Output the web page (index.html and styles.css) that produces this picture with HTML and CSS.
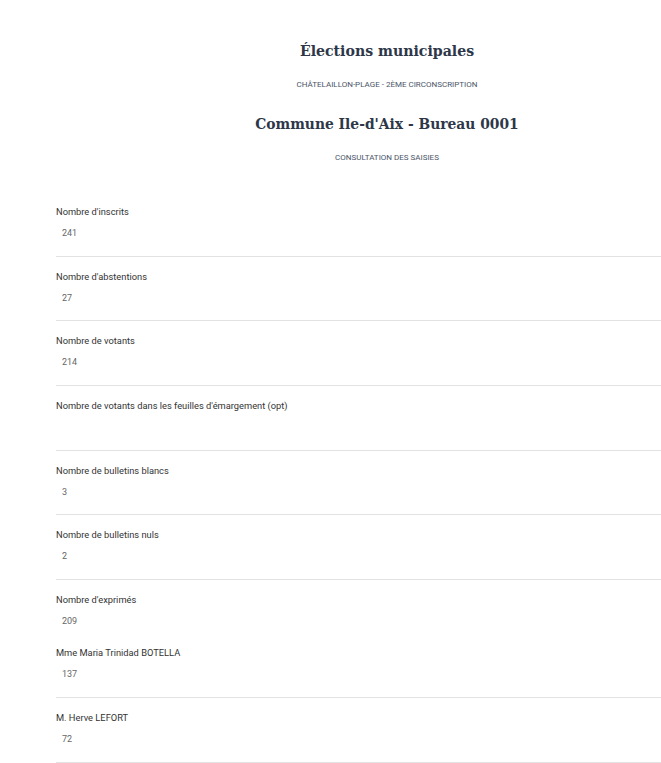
FILE: index.html
```html
<!DOCTYPE html>
<html lang="fr">
<head>
    <meta charset="UTF-8">
    <meta name="viewport" content="width=device-width, initial-scale=1.0">
    <title>Consultation des saisies</title>
    <link rel="stylesheet" href="styles.css">
</head>
<body>
    <div class="container">
        <div class="header">
            <h1>Élections municipales</h1>
            <p class="subtitle">Châtelaillon-Plage - 2ème circonscription</p>
            <h2>Commune Ile-d'Aix - Bureau 0001</h2>
            <p class="subtitle">Consultation des saisies</p>
        </div>

        <div class="results">
            <div class="field">
                <div class="field-label">Nombre d'inscrits</div>
                <div class="field-value">241</div>
            </div>
            <div class="field">
                <div class="field-label">Nombre d'abstentions</div>
                <div class="field-value">27</div>
            </div>
            <div class="field">
                <div class="field-label">Nombre de votants</div>
                <div class="field-value">214</div>
            </div>
            <div class="field">
                <div class="field-label">Nombre de votants dans les feuilles d'émargement (opt)</div>
                <div class="field-value"></div>
            </div>
            <div class="field">
                <div class="field-label">Nombre de bulletins blancs</div>
                <div class="field-value">3</div>
            </div>
            <div class="field">
                <div class="field-label">Nombre de bulletins nuls</div>
                <div class="field-value">2</div>
            </div>
            <div class="field field-total">
                <div class="field-label">Nombre d'exprimés</div>
                <div class="field-value">209</div>
            </div>
            <div class="field">
                <div class="field-label">Mme Maria Trinidad BOTELLA</div>
                <div class="field-value">137</div>
            </div>
            <div class="field">
                <div class="field-label">M. Herve LEFORT</div>
                <div class="field-value">72</div>
            </div>
        </div>
    </div>
</body>
</html>
```

FILE: styles.css
```css
body {
    font-family: Roboto, "Liberation Sans", sans-serif;
    background-color: #fff;
    color: #333;
    margin: 0;
    padding: 0;
}

.container {
    width: 662px;
    margin-left: 56px;
    padding-top: 36px;
}

.header {
    text-align: center;
    color: #2d3748;
    margin-bottom: 28px;
}

.header h1,
.header h2 {
    font-family: "DejaVu Serif Condensed", "DejaVu Serif", serif;
    font-stretch: condensed;
    font-weight: bold;
    margin: 0;
    line-height: 30px;
}

.header h1 {
    font-size: 15.7px;
}

.header h2 {
    font-size: 15.4px;
    margin-top: 18px;
}

.subtitle {
    font-size: 8px;
    text-transform: uppercase;
    color: #4a5568;
    margin: 0;
    line-height: 12px;
    margin-top: 13px;
}

.field {
    padding: 14px 0 14.7px;
    border-bottom: 1px solid #e2e2e2;
}

.field-label {
    font-size: 9.3px;
    line-height: 12px;
    color: #333;
}

.field-value {
    font-size: 9px;
    line-height: 16px;
    height: 16px;
    margin-top: 7px;
    padding-left: 6px;
    color: #666;
}

.field-total {
    padding-bottom: 4px;
    border-bottom: none;
}
```
